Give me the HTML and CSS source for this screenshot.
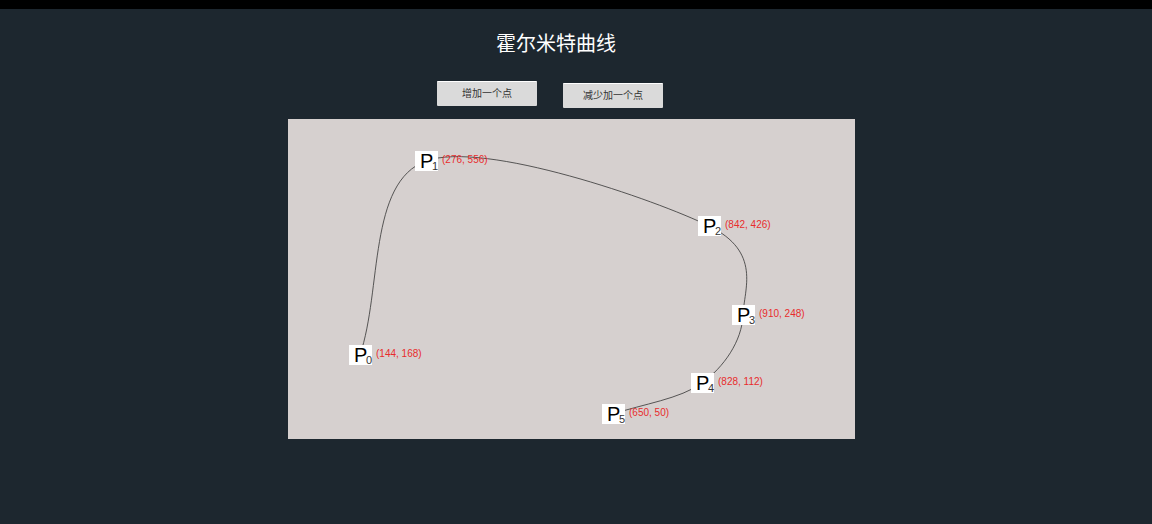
FILE: index.html
```html
<!DOCTYPE html>
<html lang="zh-CN">
<head>
<meta charset="utf-8">
<title>霍尔米特曲线</title>
<link rel="stylesheet" href="styles.css">
</head>
<body>
<main class="page">
  <h1 class="title">霍尔米特曲线</h1>
  <div class="toolbar">
    <button class="btn" type="button">增加一个点</button>
    <button class="btn btn-remove" type="button">减少加一个点</button>
  </div>
  <svg class="board" viewBox="0 0 567 320" role="img" aria-label="霍尔米特曲线">
    <path class="curve" d="M72 236C94 171 80 63 138 42C196 21 368 81 421 107C474 133 456 170 455 196C454 222 436 248 414 264C392 280 355 285 325 295"/>
    <g transform="translate(61 226)">
      <rect class="tag" width="23" height="20"/>
      <text class="name" x="5" y="17">P</text><text class="index" x="17" y="19">0</text>
      <text class="coord" x="27" y="12">(144, 168)</text>
    </g>
    <g transform="translate(127 32)">
      <rect class="tag" width="23" height="20"/>
      <text class="name" x="5" y="17">P</text><text class="index" x="17" y="19">1</text>
      <text class="coord" x="27" y="12">(276, 556)</text>
    </g>
    <g transform="translate(410 97)">
      <rect class="tag" width="23" height="20"/>
      <text class="name" x="5" y="17">P</text><text class="index" x="17" y="19">2</text>
      <text class="coord" x="27" y="12">(842, 426)</text>
    </g>
    <g transform="translate(444 186)">
      <rect class="tag" width="23" height="20"/>
      <text class="name" x="5" y="17">P</text><text class="index" x="17" y="19">3</text>
      <text class="coord" x="27" y="12">(910, 248)</text>
    </g>
    <g transform="translate(403 254)">
      <rect class="tag" width="23" height="20"/>
      <text class="name" x="5" y="17">P</text><text class="index" x="17" y="19">4</text>
      <text class="coord" x="27" y="12">(828, 112)</text>
    </g>
    <g transform="translate(314 285)">
      <rect class="tag" width="23" height="20"/>
      <text class="name" x="5" y="17">P</text><text class="index" x="17" y="19">5</text>
      <text class="coord" x="27" y="12">(650, 50)</text>
    </g>
  </svg>
</main>
</body>
</html>
```
FILE: styles.css
```css
* {
  box-sizing: border-box;
}

body {
  margin: 0;
  min-height: 100vh;
  display: flex;
  flex-direction: column;
  border-top: 9px solid #000;
  background: #1d272f;
  font-family: "Liberation Sans", "Noto Sans CJK SC", sans-serif;
}

.page {
  display: flex;
  flex-direction: column;
  align-items: center;
  padding: 20px 0;
}

.title {
  margin: 0;
  padding-right: 40px;
  color: #fff;
  font-size: 20px;
  font-weight: 400;
  line-height: 30px;
}

.toolbar {
  display: flex;
  gap: 26px;
  margin-top: 22px;
  padding-right: 52px;
}

.btn {
  width: 100px;
  height: 25px;
  padding: 0;
  border: 0;
  border-top: 1px solid #fff;
  border-radius: 1px;
  background: #dadada;
  color: #333;
  font-family: inherit;
  font-size: 10px;
  line-height: 24px;
}

.btn-remove {
  margin-top: 2px;
}

.board {
  width: 567px;
  max-width: 100%;
  margin-top: 11px;
  margin-right: 9px;
  background: #d6d0cf;
}

.curve {
  fill: none;
  stroke: #333;
  stroke-width: 0.8;
}

.tag {
  fill: #fff;
}

.name {
  fill: #000;
  font-size: 20px;
}

.index {
  fill: #333;
  font-size: 11px;
}

.coord {
  fill: #e82c2c;
  font-size: 10px;
}
```
